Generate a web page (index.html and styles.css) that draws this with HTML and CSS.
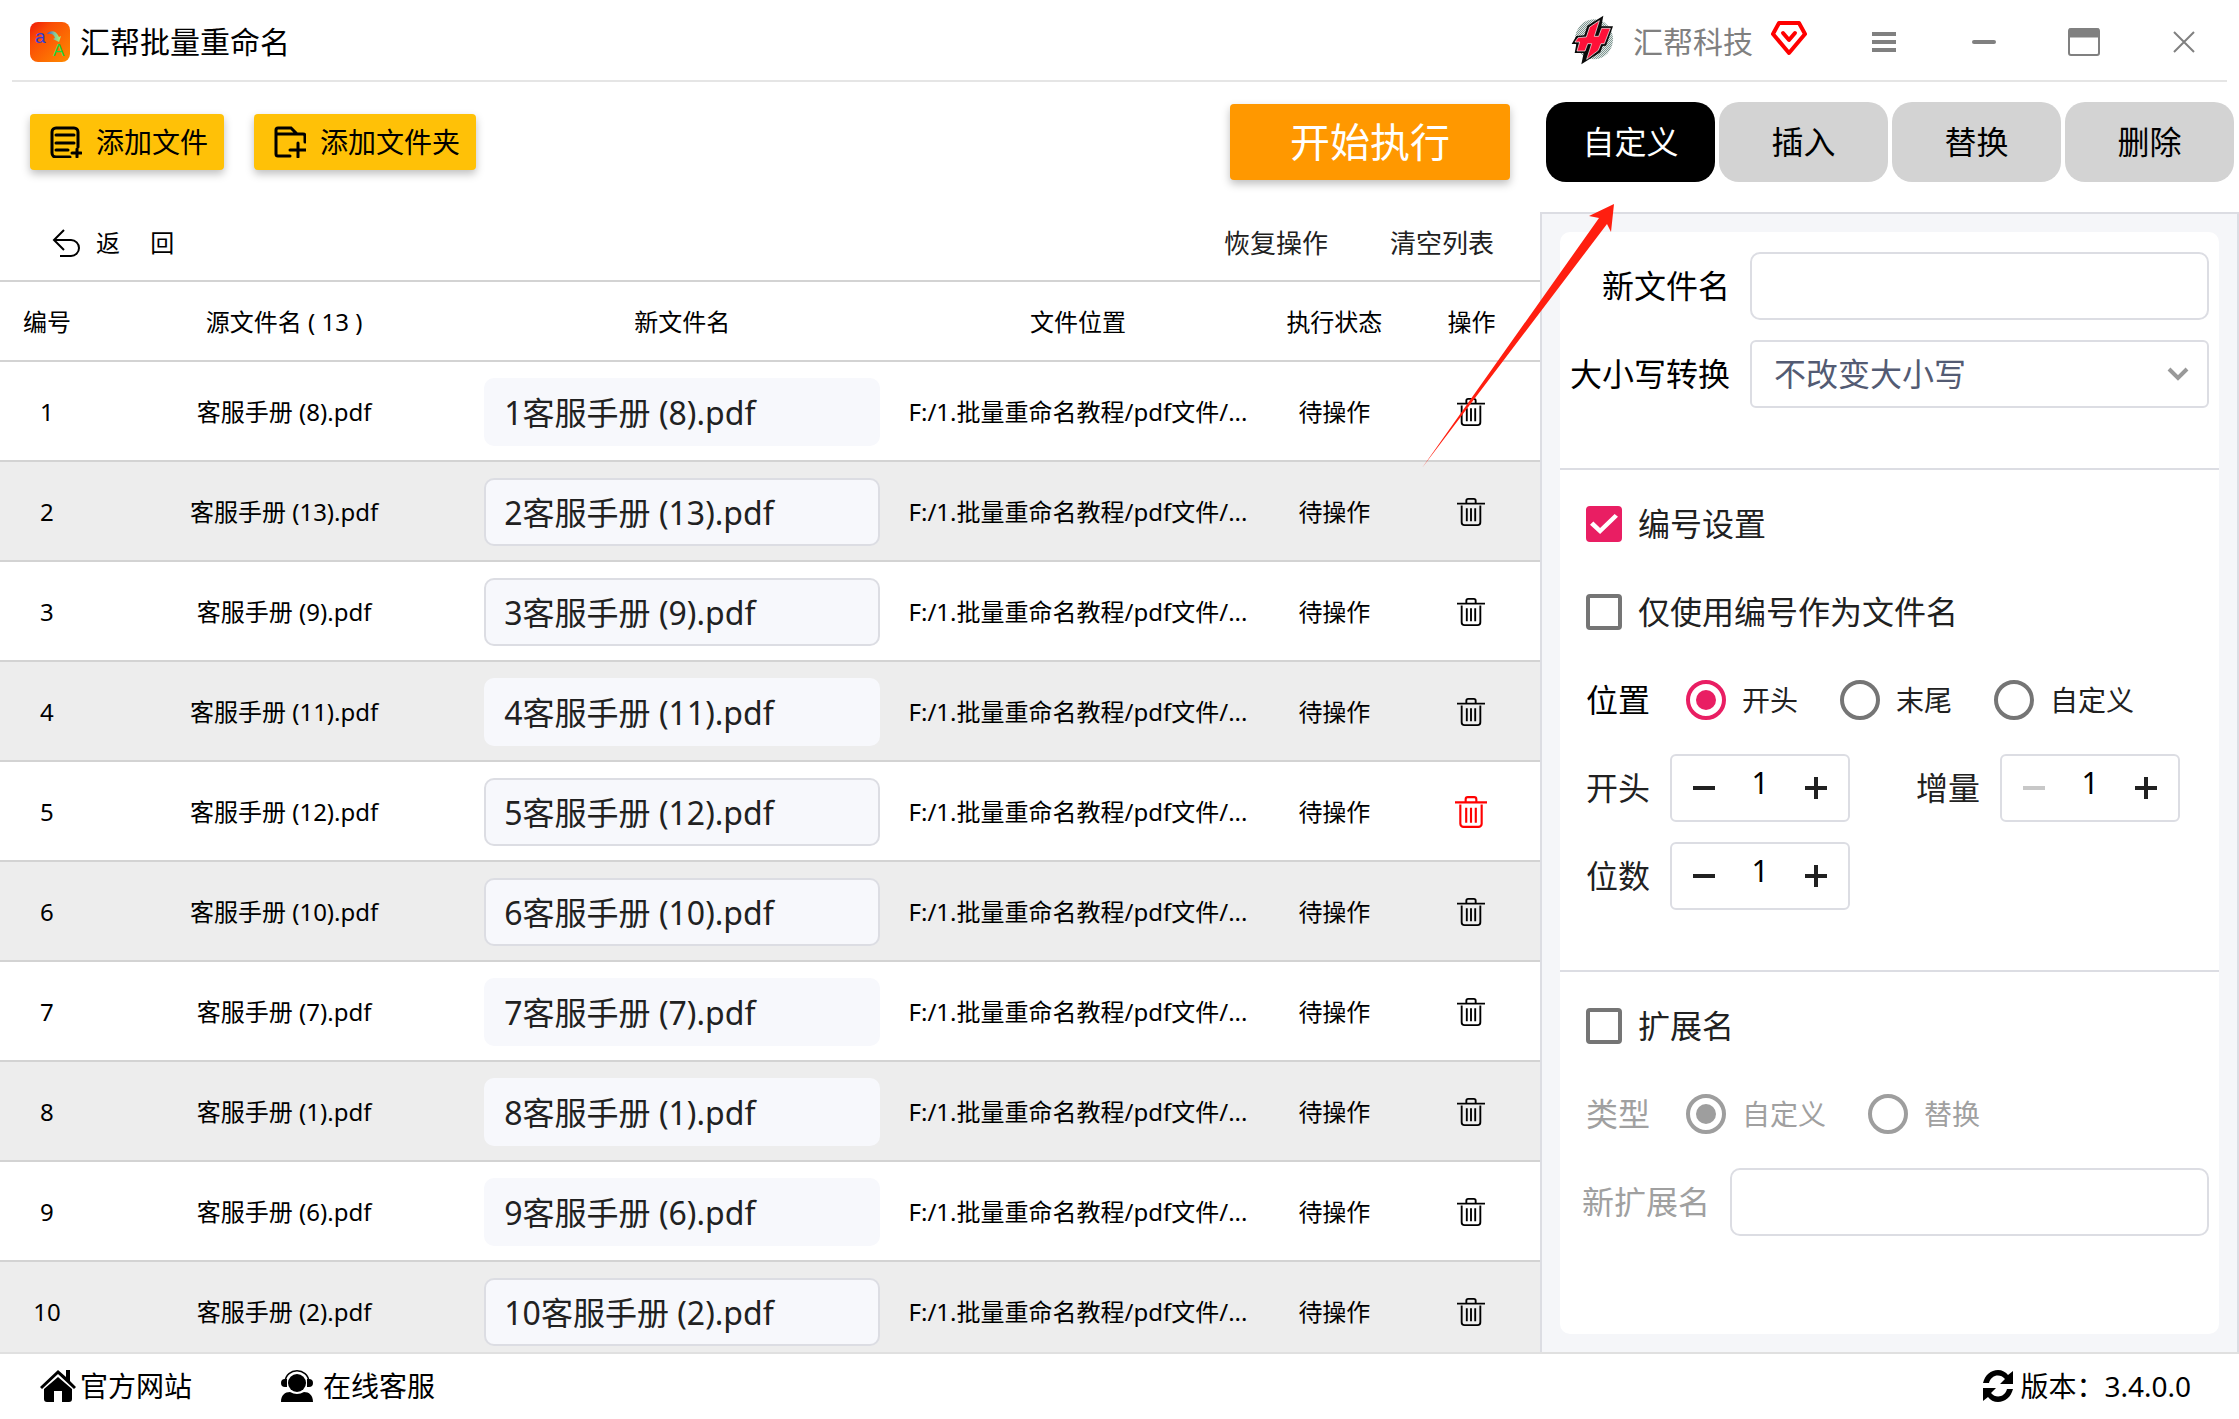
FILE: index.html
```
<!DOCTYPE html>
<html lang="zh-CN">
<head>
    <meta charset="UTF-8">
    <meta name="viewport" content="width=device-width, initial-scale=1.0">
    <title>汇帮批量重命名</title>
    <link rel="stylesheet" href="styles.css">
</head>
<body>
    <!-- Shared icons -->
    <svg class="sprite" aria-hidden="true">
        <symbol id="icon-trash" viewBox="0 0 30 30">
            <g fill="none" stroke="currentColor" stroke-width="2">
                <path d="M0 6h30M10 5V3a2 2 0 0 1 2-2h6a2 2 0 0 1 2 2v2M5 8v18a3 3 0 0 0 3 3h14a3 3 0 0 0 3-3V8M10.500 11v14M15 11v14M19.500 11v14"/>
            </g>
        </symbol>
    </svg>

    <div class="app">
        <header class="titlebar">
            <svg class="app-logo" viewBox="0 0 40 40" aria-hidden="true">
                <defs>
                    <linearGradient id="logoBg" x1="0" y1="0" x2="1" y2="1">
                        <stop offset="0" stop-color="#f01a08"/>
                        <stop offset="0.3" stop-color="#fa4e05"/>
                        <stop offset="1" stop-color="#ff8c00"/>
                    </linearGradient>
                    <linearGradient id="logoArrow" x1="0" y1="0" x2="1" y2="0">
                        <stop offset="0" stop-color="#2f52d8"/>
                        <stop offset="0.5" stop-color="#7fc0a0"/>
                        <stop offset="1" stop-color="#b5f56b"/>
                    </linearGradient>
                </defs>
                <rect width="40" height="40" rx="8" fill="url(#logoBg)"/>
                <text class="logo-a" x="5" y="21">a</text>
                <path d="M17 12c3-4 9-4 12 3l2-1-2 6-6-3 2-1c-1-4-4-5-8-4z" fill="url(#logoArrow)"/>
                <text class="logo-b" x="23" y="34">A</text>
            </svg>
            <h1>汇帮批量重命名</h1>

            <div class="account">
                <svg class="brand-logo" viewBox="36 18 132 150" aria-hidden="true">
                    <defs>
                        <pattern id="dots" width="6" height="6" patternUnits="userSpaceOnUse">
                            <rect width="6" height="6" fill="#dfe8e5"/>
                            <rect width="3" height="3" fill="#7f9490"/>
                            <rect x="3" y="3" width="3" height="3" fill="#7f9490"/>
                        </pattern>
                    </defs>
                    <ellipse cx="105" cy="91" rx="57" ry="60" fill="url(#dots)"/>
                    <path d="M133 20L85 50l-9 29-24 2-14 24h14l-5 27h27l-7 34 57-36 7-19 10-1 21-58h-35z" fill="#0a0a0a"/>
                    <path d="M121 35L92 54l-10 30-25 2-9 13h14l-8 27h24l8-22h12l-15 47 35-27 8-20h10l18-46h-26l-9 24h-13z" fill="#ff1038" stroke="#fff" stroke-width="2"/>
                </svg>
                <span>汇帮科技</span>
                <svg class="vip" viewBox="0 0 36 44" aria-hidden="true">
                    <g fill="none" stroke="#ff0000" stroke-width="4" stroke-linejoin="round" stroke-linecap="round">
                        <path d="M8 3h20l6 11-16 19L2 14z"/>
                        <path d="M12 13l6 7 6-7"/>
                    </g>
                </svg>
            </div>

            <div class="window-buttons">
                <button type="button" aria-label="菜单">
                    <svg viewBox="0 0 32 32"><path d="M4 8h24M4 16h24M4 24h24" stroke-width="4"/></svg>
                </button>
                <button type="button" aria-label="最小化">
                    <svg viewBox="0 0 32 32"><path d="M6 16h20" stroke-width="4" stroke-linecap="round"/></svg>
                </button>
                <button type="button" aria-label="最大化">
                    <svg viewBox="0 0 32 32"><rect x="1" y="3" width="30" height="26" rx="2" stroke-width="2"/><path d="M1 7h30" stroke-width="9"/></svg>
                </button>
                <button type="button" aria-label="关闭">
                    <svg viewBox="0 0 32 32"><path d="M6 6l20 20M26 6L6 26" stroke-width="2"/></svg>
                </button>
            </div>
        </header>

        <div class="content">
            <main class="main">
                <div class="toolbar">
                    <button type="button" class="btn-add">
                        <svg viewBox="0 0 32 32" aria-hidden="true"><path d="M20 31H6a4 4 0 0 1-4-4V6a4 4 0 0 1 4-4h18a4 4 0 0 1 4 4v15M6 9h18M6 17h18M6 24h12M22 27h9M27 23v8" stroke-width="3"/></svg>
                        添加文件
                    </button>
                    <button type="button" class="btn-add">
                        <svg viewBox="0 0 32 32" aria-hidden="true"><path d="M16 30H4a2 2 0 0 1-2-2V4a2 2 0 0 1 2-2h13l6 6h6a2 2 0 0 1 2 2v6M2 8h21M16 24h16M24 17v14" stroke-width="3"/></svg>
                        添加文件夹
                    </button>
                    <button type="button" class="btn-start">开始执行</button>
                </div>

                <div class="actions">
                    <button type="button" class="btn-text btn-back">
                        <svg viewBox="0 0 28 28" aria-hidden="true"><path d="M12 1L2 11l10 10M2 11h17a8 8 0 0 1 0 16H8"/></svg>
                        返&emsp;&nbsp;回
                    </button>
                    <button type="button" class="btn-text">恢复操作</button>
                    <button type="button" class="btn-text">清空列表</button>
                </div>

                <div class="table-wrap">
                    <table>
                        <colgroup>
                            <col class="col-no">
                            <col class="col-source">
                            <col class="col-new">
                            <col class="col-path">
                            <col class="col-status">
                            <col class="col-action">
                        </colgroup>
                        <thead>
                            <tr>
                                <th>编号</th>
                                <th>源文件名 ( 13 )</th>
                                <th>新文件名</th>
                                <th>文件位置</th>
                                <th>执行状态</th>
                                <th>操作</th>
                            </tr>
                        </thead>
                        <tbody>
                            <tr>
                                <td>1</td>
                                <td>客服手册 (8).pdf</td>
                                <td><input type="text" class="name-input" aria-label="新文件名 1" value="1客服手册 (8).pdf"></td>
                                <td>F:/1.批量重命名教程/pdf文件/...</td>
                                <td>待操作</td>
                                <td><button type="button" class="btn-delete" aria-label="删除"><svg><use href="#icon-trash"/></svg></button></td>
                            </tr>
                            <tr>
                                <td>2</td>
                                <td>客服手册 (13).pdf</td>
                                <td><input type="text" class="name-input outlined" aria-label="新文件名 2" value="2客服手册 (13).pdf"></td>
                                <td>F:/1.批量重命名教程/pdf文件/...</td>
                                <td>待操作</td>
                                <td><button type="button" class="btn-delete" aria-label="删除"><svg><use href="#icon-trash"/></svg></button></td>
                            </tr>
                            <tr>
                                <td>3</td>
                                <td>客服手册 (9).pdf</td>
                                <td><input type="text" class="name-input outlined" aria-label="新文件名 3" value="3客服手册 (9).pdf"></td>
                                <td>F:/1.批量重命名教程/pdf文件/...</td>
                                <td>待操作</td>
                                <td><button type="button" class="btn-delete" aria-label="删除"><svg><use href="#icon-trash"/></svg></button></td>
                            </tr>
                            <tr>
                                <td>4</td>
                                <td>客服手册 (11).pdf</td>
                                <td><input type="text" class="name-input" aria-label="新文件名 4" value="4客服手册 (11).pdf"></td>
                                <td>F:/1.批量重命名教程/pdf文件/...</td>
                                <td>待操作</td>
                                <td><button type="button" class="btn-delete" aria-label="删除"><svg><use href="#icon-trash"/></svg></button></td>
                            </tr>
                            <tr>
                                <td>5</td>
                                <td>客服手册 (12).pdf</td>
                                <td><input type="text" class="name-input outlined" aria-label="新文件名 5" value="5客服手册 (12).pdf"></td>
                                <td>F:/1.批量重命名教程/pdf文件/...</td>
                                <td>待操作</td>
                                <td><button type="button" class="btn-delete active" aria-label="删除"><svg><use href="#icon-trash"/></svg></button></td>
                            </tr>
                            <tr>
                                <td>6</td>
                                <td>客服手册 (10).pdf</td>
                                <td><input type="text" class="name-input outlined" aria-label="新文件名 6" value="6客服手册 (10).pdf"></td>
                                <td>F:/1.批量重命名教程/pdf文件/...</td>
                                <td>待操作</td>
                                <td><button type="button" class="btn-delete" aria-label="删除"><svg><use href="#icon-trash"/></svg></button></td>
                            </tr>
                            <tr>
                                <td>7</td>
                                <td>客服手册 (7).pdf</td>
                                <td><input type="text" class="name-input" aria-label="新文件名 7" value="7客服手册 (7).pdf"></td>
                                <td>F:/1.批量重命名教程/pdf文件/...</td>
                                <td>待操作</td>
                                <td><button type="button" class="btn-delete" aria-label="删除"><svg><use href="#icon-trash"/></svg></button></td>
                            </tr>
                            <tr>
                                <td>8</td>
                                <td>客服手册 (1).pdf</td>
                                <td><input type="text" class="name-input" aria-label="新文件名 8" value="8客服手册 (1).pdf"></td>
                                <td>F:/1.批量重命名教程/pdf文件/...</td>
                                <td>待操作</td>
                                <td><button type="button" class="btn-delete" aria-label="删除"><svg><use href="#icon-trash"/></svg></button></td>
                            </tr>
                            <tr>
                                <td>9</td>
                                <td>客服手册 (6).pdf</td>
                                <td><input type="text" class="name-input" aria-label="新文件名 9" value="9客服手册 (6).pdf"></td>
                                <td>F:/1.批量重命名教程/pdf文件/...</td>
                                <td>待操作</td>
                                <td><button type="button" class="btn-delete" aria-label="删除"><svg><use href="#icon-trash"/></svg></button></td>
                            </tr>
                            <tr>
                                <td>10</td>
                                <td>客服手册 (2).pdf</td>
                                <td><input type="text" class="name-input outlined" aria-label="新文件名 10" value="10客服手册 (2).pdf"></td>
                                <td>F:/1.批量重命名教程/pdf文件/...</td>
                                <td>待操作</td>
                                <td><button type="button" class="btn-delete" aria-label="删除"><svg><use href="#icon-trash"/></svg></button></td>
                            </tr>
                        </tbody>
                    </table>
                </div>
            </main>

            <aside class="sidebar">
                <nav class="tabs">
                    <button type="button" class="active">自定义</button>
                    <button type="button">插入</button>
                    <button type="button">替换</button>
                    <button type="button">删除</button>
                </nav>

                <div class="panel">
                    <form class="card">
                        <section>
                            <div class="field">
                                <label for="newName" class="label-wide">新文件名</label>
                                <input type="text" id="newName" class="text-box">
                            </div>
                            <div class="field">
                                <label for="letterCase" class="label-wide">大小写转换</label>
                                <div class="select-box">
                                    <select id="letterCase">
                                        <option>不改变大小写</option>
                                    </select>
                                    <svg viewBox="0 0 22 14" aria-hidden="true"><path d="M2 2l9 9 9-9"/></svg>
                                </div>
                            </div>
                        </section>

                        <section>
                            <div class="row">
                                <label class="check"><input type="checkbox" checked>编号设置</label>
                            </div>
                            <div class="row">
                                <label class="check"><input type="checkbox">仅使用编号作为文件名</label>
                            </div>
                            <div class="row radios">
                                <span class="row-title">位置</span>
                                <label><input type="radio" name="position" checked>开头</label>
                                <label><input type="radio" name="position">末尾</label>
                                <label><input type="radio" name="position">自定义</label>
                            </div>
                            <div class="row numbers">
                                <label for="start">开头</label>
                                <div class="stepper">
                                    <button type="button" aria-label="减少"><svg viewBox="0 0 22 22"><path d="M0 11h22"/></svg></button>
                                    <input type="text" id="start" value="1">
                                    <button type="button" aria-label="增加"><svg viewBox="0 0 22 22"><path d="M0 11h22M11 0v22"/></svg></button>
                                </div>
                                <label for="step" class="second">增量</label>
                                <div class="stepper">
                                    <button type="button" aria-label="减少" disabled><svg viewBox="0 0 22 22"><path d="M0 11h22"/></svg></button>
                                    <input type="text" id="step" value="1">
                                    <button type="button" aria-label="增加"><svg viewBox="0 0 22 22"><path d="M0 11h22M11 0v22"/></svg></button>
                                </div>
                            </div>
                            <div class="row numbers">
                                <label for="digits">位数</label>
                                <div class="stepper">
                                    <button type="button" aria-label="减少"><svg viewBox="0 0 22 22"><path d="M0 11h22"/></svg></button>
                                    <input type="text" id="digits" value="1">
                                    <button type="button" aria-label="增加"><svg viewBox="0 0 22 22"><path d="M0 11h22M11 0v22"/></svg></button>
                                </div>
                            </div>
                        </section>

                        <section>
                            <div class="row">
                                <label class="check"><input type="checkbox">扩展名</label>
                            </div>
                            <div class="row radios disabled">
                                <span class="row-title">类型</span>
                                <label><input type="radio" name="extType" checked disabled>自定义</label>
                                <label><input type="radio" name="extType" disabled>替换</label>
                            </div>
                            <div class="field disabled">
                                <label for="newExt" class="label-ext">新扩展名</label>
                                <input type="text" id="newExt" class="text-box" disabled>
                            </div>
                        </section>
                    </form>
                </div>

                <!-- Pointer to the active tab -->
                <svg class="pointer" viewBox="0 0 192 264" aria-hidden="true">
                    <path d="M192 0L167 12l10 2L0 264 185 20l4 8z" fill="#ff1f10"/>
                </svg>
            </aside>
        </div>

        <footer class="statusbar">
            <a href="#">
                <svg viewBox="0 0 36 32" aria-hidden="true">
                    <path d="M0 17L18 0l8 7V0h4v11l6 6-2 2L18 4 2 19z"/>
                    <path d="M18 7L4 19v10a3 3 0 0 0 3 3h7V21h8v11h7a3 3 0 0 0 3-3V19z"/>
                </svg>
                官方网站
            </a>
            <a href="#" class="support">
                <svg viewBox="0 0 32 32" aria-hidden="true">
                    <circle cx="16" cy="13" r="9"/>
                    <path d="M4 12C5-3 27-3 28 12" fill="none" stroke="#000" stroke-width="1.500"/>
                    <path d="M4 9h2v8H4a4 4 0 0 1 0-8zM28 9h-2v8h2a4 4 0 0 0 0-8z"/>
                    <path d="M0 32c0-7 4-10 9-10q7 4 14 0c5 0 9 3 9 10z"/>
                </svg>
                在线客服
            </a>
            <span class="version">
                <svg viewBox="0 0 32 32" aria-hidden="true">
                    <path d="M1 13C3 5 9 0 16 0c4 0 8 2 10 5l5-4v13H18l5-5c-5-6-14-4-16 4z"/>
                    <path d="M31 19c-2 8-8 13-15 13-4 0-8-2-10-5l-5 4V18h13l-5 5c5 6 14 4 16-4z"/>
                </svg>
                版本：3.4.0.0
            </span>
        </footer>
    </div>
</body>
</html>
```
FILE: styles.css
```
* {
    box-sizing: border-box;
}

body {
    margin: 0;
    font-family: "Noto Sans", "Noto Sans CJK SC", sans-serif;
    font-size: 24px;
    line-height: 36px;
    color: #000;
    background-color: #fff;
}

button,
input,
select {
    font: inherit;
    color: inherit;
    margin: 0;
}

button {
    display: flex;
    align-items: center;
    justify-content: center;
    padding: 0;
    border: none;
    background: none;
    cursor: pointer;
}

.sprite {
    display: none;
}

.app {
    display: flex;
    flex-direction: column;
    height: 100vh;
    overflow: hidden;
}

/* Title bar */
.titlebar {
    display: flex;
    align-items: center;
    flex: none;
    height: 82px;
    margin: 0 12px;
    padding: 4px 0 0 18px;
    border-bottom: 2px solid #e5e5e5;
}

.app-logo {
    width: 40px;
    height: 40px;
}

.logo-a,
.logo-b {
    font-family: "Liberation Sans", sans-serif;
    font-size: 19px;
    fill: #2f3fd8;
}

.logo-b {
    font-size: 17px;
    fill: #19d83c;
}

h1 {
    margin: 0 auto 0 10px;
    font-size: 30px;
    font-weight: normal;
}

.account {
    display: flex;
    align-items: center;
    gap: 18px;
    margin-right: 34px;
    font-size: 30px;
    color: #808080;
}

.brand-logo {
    width: 44px;
    height: 50px;
    margin-bottom: 4px;
}

.vip {
    width: 36px;
    height: 44px;
}

.window-buttons {
    display: flex;
    gap: 14px;
}

.window-buttons button {
    width: 86px;
    height: 60px;
}

.window-buttons svg {
    width: 32px;
    height: 32px;
    fill: none;
    stroke: #808080;
}

/* Layout */
.content {
    display: grid;
    grid-template-columns: minmax(0, 1fr) 699px;
    flex: 1;
    min-height: 0;
}

.main,
.sidebar {
    display: flex;
    flex-direction: column;
    min-height: 0;
}

.sidebar {
    position: relative;
}

/* Toolbar */
.toolbar {
    display: flex;
    align-items: center;
    flex: none;
    gap: 30px;
    height: 120px;
    padding: 0 30px;
}

.btn-add {
    gap: 14px;
    height: 56px;
    padding: 0 16px 0 20px;
    border-radius: 4px;
    background-color: #ffc107;
    box-shadow: 0 4px 8px rgba(0, 0, 0, 0.25);
    font-size: 28px;
}

.btn-add svg {
    width: 32px;
    height: 32px;
    fill: none;
    stroke: #000;
    stroke-linecap: round;
}

.btn-start {
    width: 280px;
    height: 76px;
    margin-left: auto;
    border-radius: 4px;
    background-color: #ff9800;
    box-shadow: 0 4px 8px rgba(0, 0, 0, 0.25);
    font-size: 40px;
    color: #fff;
}

.actions {
    display: flex;
    align-items: center;
    flex: none;
    gap: 62px;
    height: 78px;
    padding: 4px 46px 0 52px;
}

.btn-text {
    font-size: 26px;
    color: #212121;
}

.btn-back {
    gap: 16px;
    margin-right: auto;
    font-size: 24px;
    color: #000;
}

.btn-back svg {
    width: 28px;
    height: 28px;
    fill: none;
    stroke: #000;
    stroke-width: 2;
}

/* File table */
.table-wrap {
    flex: 1;
    min-height: 0;
    overflow: hidden;
    border-top: 2px solid #d3d3d3;
}

table {
    width: 100%;
    table-layout: fixed;
    border-spacing: 0;
    text-align: center;
}

.col-no {
    width: 6.1%;
}

.col-source {
    width: 24.7%;
}

.col-new {
    width: 27%;
}

.col-path {
    width: 24.4%;
}

.col-status,
.col-action {
    width: 8.9%;
}

th,
td {
    height: 100px;
    padding: 2px 10px 0;
    border-bottom: 2px solid #d3d3d3;
    white-space: nowrap;
}

th {
    height: 80px;
    font-weight: normal;
}

tbody tr:nth-child(even) {
    background-color: #ededed;
}

.name-input {
    display: block;
    width: 100%;
    height: 68px;
    padding: 0 18px 2px;
    border: 2px solid #f7f8fc;
    border-radius: 10px;
    background-color: #f7f8fc;
    font-size: 32px;
    color: #212121;
}

.name-input.outlined {
    border-color: #dcdde3;
}

.btn-delete {
    margin: 0 auto;
}

.btn-delete svg {
    width: 28px;
    height: 28px;
}

.btn-delete.active {
    color: #ff0000;
}

.btn-delete.active svg {
    width: 32px;
    height: 32px;
}

/* Tabs */
.tabs {
    display: flex;
    flex: none;
    gap: 4px;
    padding: 20px 5px 30px 6px;
}

.tabs button {
    flex: 1;
    height: 80px;
    border-radius: 20px;
    background-color: #d3d3d3;
    font-size: 32px;
}

.tabs .active {
    background-color: #000;
    color: #fff;
}

/* Settings panel */
.panel {
    display: flex;
    flex: 1;
    padding: 18px;
    border: 2px solid #dcdde3;
    border-bottom: none;
    background-color: #f5f6f9;
}

.card {
    flex: 1;
    min-width: 0;
    border-radius: 10px;
    background-color: #fff;
    font-size: 32px;
}

.card section {
    display: flex;
    flex-direction: column;
    gap: 20px;
    padding: 20px 10px 60px;
    border-bottom: 2px solid #dcdde3;
}

.card section:last-child {
    border-bottom: none;
}

.field,
.row {
    display: flex;
    align-items: center;
    height: 68px;
}

.field {
    gap: 20px;
}

.row {
    padding-left: 16px;
    color: #212121;
}

.label-wide {
    width: 160px;
    text-align: right;
}

.label-ext {
    padding-left: 12px;
}

.text-box,
.select-box {
    flex: 1;
    min-width: 0;
    height: 68px;
    border: 2px solid #dcdde3;
    border-radius: 10px;
    background-color: #fff;
}

.text-box {
    padding: 0 18px;
}

.select-box {
    display: flex;
    align-items: center;
    padding-right: 18px;
    border-radius: 6px;
}

.select-box select {
    flex: 1;
    height: 64px;
    padding: 0 22px;
    border: none;
    background: none;
    appearance: none;
    color: #535b73;
}

.select-box svg {
    width: 22px;
    height: 14px;
    fill: none;
    stroke: #999;
    stroke-width: 4;
}

.check {
    display: flex;
    align-items: center;
    gap: 16px;
}

.check input {
    display: grid;
    place-items: center;
    width: 36px;
    height: 36px;
    border: 4px solid #757575;
    border-radius: 4px;
    appearance: none;
}

.check input:checked {
    border-color: #e91e63;
    background-color: #e91e63;
}

.check input:checked::after {
    content: "";
    width: 28px;
    height: 20px;
    background-color: #fff;
    clip-path: polygon(0 54%, 12% 38%, 36% 70%, 88% 0, 100% 14%, 36% 100%);
}

.row-title {
    color: #000;
}

.radios {
    gap: 42px;
}

.radios .row-title {
    margin-right: -6px;
}

.radios label {
    display: flex;
    align-items: center;
    gap: 16px;
    font-size: 28px;
}

.radios input {
    display: grid;
    place-items: center;
    width: 40px;
    height: 40px;
    border: 4px solid #757575;
    border-radius: 50%;
    appearance: none;
}

.radios input:checked {
    border-color: #e91e63;
}

.radios input:checked::after {
    content: "";
    width: 20px;
    height: 20px;
    border-radius: 50%;
    background-color: #e91e63;
}

.disabled,
.disabled .row-title {
    color: #a0a0a0;
}

.radios input:disabled {
    border-color: #9e9e9e;
}

.radios input:disabled::after {
    background-color: #9e9e9e;
}

.numbers {
    gap: 20px;
}

.numbers .second {
    margin-left: 46px;
}

.stepper {
    display: flex;
    align-items: center;
    width: 180px;
    height: 68px;
    padding: 0 10px;
    border: 2px solid #dcdde3;
    border-radius: 6px;
}

.stepper button {
    flex: none;
    width: 44px;
    height: 64px;
}

.stepper svg {
    width: 22px;
    height: 22px;
    stroke: #212121;
    stroke-width: 4;
}

.stepper button:disabled svg {
    stroke: #c8c8c8;
}

.stepper input {
    flex: 1;
    min-width: 0;
    height: 64px;
    padding: 0 0 12px;
    border: none;
    background: none;
    text-align: center;
    font-size: 30px;
    color: #000;
}

.pointer {
    position: absolute;
    left: -118px;
    top: 122px;
    width: 192px;
    height: 264px;
    pointer-events: none;
}

/* Status bar */
.statusbar {
    display: flex;
    align-items: center;
    flex: none;
    height: 67px;
    padding: 0 48px 2px 40px;
    border-top: 2px solid #e0e0e0;
    font-size: 28px;
}

.statusbar a,
.version {
    display: flex;
    align-items: center;
    gap: 4px;
    color: #000;
    text-decoration: none;
}

.statusbar svg {
    width: 36px;
    height: 32px;
}

.statusbar .support {
    gap: 8px;
    margin-left: 87px;
}

.version {
    margin-left: auto;
}
```
